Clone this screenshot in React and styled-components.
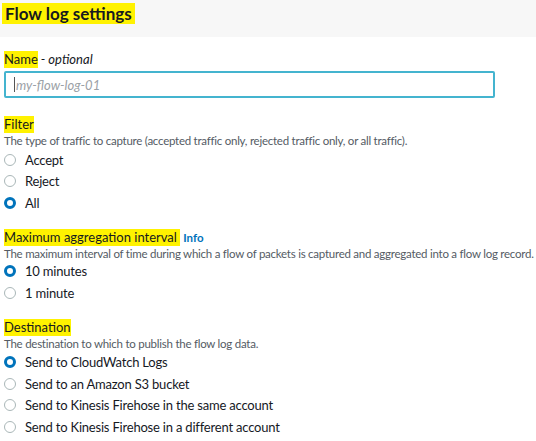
import React from "react";
import styled, { createGlobalStyle } from "styled-components";

const GlobalStyle = createGlobalStyle`
    body {
        margin: 0;
        background: #fff;
        font-family: Lato, "Liberation Sans", sans-serif;
        color: #16191f;
    }
`;

const Header = styled.div`
    background-color: #f7f7f7;
    height: 37px;
    padding: 3px 0 0 2px;
    box-sizing: border-box;
`;

const Mark = styled.span`
    background-color: #fff200;
`;

const Title = styled.h2`
    margin: 0;
    font-size: 17px;
    font-weight: 700;
    line-height: 21px;
    display: inline-block;
    background-color: #fff200;
    padding: 0 3px 0 3px;
`;

const Body = styled.div`
    padding: 14px 4px 0 4px;
    display: flex;
    flex-direction: column;
`;

const Field = styled.div`
    display: flex;
    flex-direction: column;
    margin-bottom: ${props => props.gap || 16}px;
`;

const Label = styled.div`
    font-size: 13px;
    line-height: 17px;
    display: flex;
    align-items: center;
`;

const Optional = styled.i`
    margin-left: 3px;
`;

const Info = styled.a`
    color: #0073bb;
    font-weight: 700;
    font-size: 11.5px;
    margin-left: 3px;
    text-decoration: none;
`;

const Description = styled.div`
    font-size: 11.5px;
    letter-spacing: -0.25px;
    color: #545b64;
    line-height: 16px;
    white-space: nowrap;
`;

const Input = styled.div`
    margin-top: 3px;
    width: 491px;
    height: 27px;
    box-sizing: border-box;
    border: 2px solid #44b4cf;
    border-radius: 2px;
    display: flex;
    align-items: center;
    padding-left: 8px;
    font-size: 13px;
    font-style: italic;
    color: #9ba1a6;
`;

const Caret = styled.span`
    width: 1px;
    height: 15px;
    background: #555;
    margin-right: 1px;
`;

const RadioList = styled.div`
    display: flex;
    flex-direction: column;
    margin-top: ${props => props.offset || 0}px;
`;

const RadioRow = styled.label`
    display: flex;
    align-items: center;
    height: 21.5px;
    font-size: 13px;
    letter-spacing: -0.2px;
    gap: 9px;
`;

const Dot = styled.span`
    width: 12px;
    height: 12px;
    box-sizing: border-box;
    border-radius: 50%;
    border: ${props => (props.checked ? "3.5px solid #0073bb" : "1px solid #aab7b8")};
    background: #fff;
`;

const Radio = ({ checked, children }) => (
    <RadioRow>
        <Dot checked={checked} />
        {children}
    </RadioRow>
);

const App = () => {
    return (
        <>
            <GlobalStyle />
            <Header>
                <Title>Flow log settings</Title>
            </Header>
            <Body>
                <Field gap={18}>
                    <Label>
                        <Mark>Name</Mark>
                        <Optional>- optional</Optional>
                    </Label>
                    <Input>
                        <Caret />
                        my-flow-log-01
                    </Input>
                </Field>
                <Field gap={15}>
                    <Label>
                        <Mark>Filter</Mark>
                    </Label>
                    <Description>
                        The type of traffic to capture (accepted traffic only, rejected traffic only, or all traffic).
                    </Description>
                    <RadioList>
                        <Radio>Accept</Radio>
                        <Radio>Reject</Radio>
                        <Radio checked>All</Radio>
                    </RadioList>
                </Field>
                <Field gap={15}>
                    <Label>
                        <Mark>Maximum aggregation interval&nbsp;</Mark>
                        <Info>Info</Info>
                    </Label>
                    <Description>
                        The maximum interval of time during which a flow of packets is captured and aggregated into a flow log record.
                    </Description>
                    <RadioList offset={-1}>
                        <Radio checked>10 minutes</Radio>
                        <Radio>1 minute</Radio>
                    </RadioList>
                </Field>
                <Field>
                    <Label>
                        <Mark>Destination</Mark>
                    </Label>
                    <Description>The destination to which to publish the flow log data.</Description>
                    <RadioList offset={0}>
                        <Radio checked>Send to CloudWatch Logs</Radio>
                        <Radio>Send to an Amazon S3 bucket</Radio>
                        <Radio>Send to Kinesis Firehose in the same account</Radio>
                        <Radio>Send to Kinesis Firehose in a different account</Radio>
                    </RadioList>
                </Field>
            </Body>
        </>
    );
};

export default App;
